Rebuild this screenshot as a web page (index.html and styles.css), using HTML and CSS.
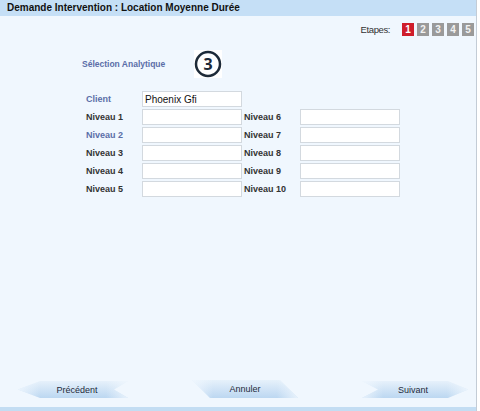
FILE: index.html
```html
<!DOCTYPE html>
<html lang="fr">
<head>
<meta charset="utf-8">
<title>Demande Intervention</title>
<link rel="stylesheet" href="styles.css">
</head>
<body>
<div class="window">
  <div class="panel">
    <div class="header">Demande Intervention : Location Moyenne Durée</div>
    <div class="content">
      <div class="steps">
        <span class="steps-label">Etapes:</span>
        <span class="step active">1</span>
        <span class="step">2</span>
        <span class="step">3</span>
        <span class="step">4</span>
        <span class="step">5</span>
      </div>
      <div class="section">
        <span class="section-title">Sélection Analytique</span>
        <span class="badge">
          <svg width="28" height="28" viewBox="0 0 28 28">
            <rect width="28" height="28" fill="#ffffff"/>
            <circle cx="14" cy="14" r="12" fill="none" stroke="#1d2a38" stroke-width="2.5"/>
            <text x="14" y="19.5" text-anchor="middle" font-family="Open Sans, Liberation Sans, sans-serif" font-weight="700" font-size="16" fill="#1d2a38">3</text>
          </svg>
        </span>
      </div>
      <div class="form">
        <label class="lbl blue">Client</label>
        <input class="field" type="text" value="Phoenix Gfi">
        <span></span><span></span>
        <label class="lbl">Niveau 1</label><input class="field" type="text">
        <label class="lbl">Niveau 6</label><input class="field" type="text">
        <label class="lbl blue">Niveau 2</label><input class="field" type="text">
        <label class="lbl">Niveau 7</label><input class="field" type="text">
        <label class="lbl">Niveau 3</label><input class="field" type="text">
        <label class="lbl">Niveau 8</label><input class="field" type="text">
        <label class="lbl">Niveau 4</label><input class="field" type="text">
        <label class="lbl">Niveau 9</label><input class="field" type="text">
        <label class="lbl">Niveau 5</label><input class="field" type="text">
        <label class="lbl">Niveau 10</label><input class="field" type="text">
      </div>
      <div class="buttons">
        <div class="btn btn-prev">
          <svg class="btn-shape" width="110" height="17" viewBox="0 0 110 17" preserveAspectRatio="none">
            <defs>
              <linearGradient id="gv" x1="0" y1="0" x2="0" y2="1">
                <stop offset="0" stop-color="#e6f1fb"/>
                <stop offset="1" stop-color="#bcd7f1"/>
              </linearGradient>
              <linearGradient id="gh" x1="0" y1="0" x2="1" y2="0">
                <stop offset="0" stop-color="#f0f7fe" stop-opacity="0.85"/>
                <stop offset="0.2" stop-color="#f0f7fe" stop-opacity="0"/>
                <stop offset="0.8" stop-color="#f0f7fe" stop-opacity="0"/>
                <stop offset="1" stop-color="#f0f7fe" stop-opacity="0.85"/>
              </linearGradient>
            </defs>
            <polygon points="0,8.5 22,0 110,0 96,8.5 110,17 22,17" fill="url(#gv)"/>
            <polygon points="0,8.5 22,0 110,0 96,8.5 110,17 22,17" fill="url(#gh)"/>
          </svg>
          <span class="btn-text">Précédent</span>
        </div>
        <div class="btn btn-cancel">
          <svg class="btn-shape" width="106" height="18" viewBox="0 0 106 18" preserveAspectRatio="none">
            <polygon points="0,0 88,0 106,18 18,18" fill="url(#gv)"/>
            <polygon points="0,0 88,0 106,18 18,18" fill="url(#gh)"/>
          </svg>
          <span class="btn-text">Annuler</span>
        </div>
        <div class="btn btn-next">
          <svg class="btn-shape" width="106" height="17" viewBox="0 0 106 17" preserveAspectRatio="none">
            <polygon points="0,0 86,0 106,8.5 86,17 0,17 16,8.5" fill="url(#gv)"/>
            <polygon points="0,0 86,0 106,8.5 86,17 0,17 16,8.5" fill="url(#gh)"/>
          </svg>
          <span class="btn-text">Suivant</span>
        </div>
      </div>
    </div>
    <div class="footer-bar"></div>
  </div>
</div>
</body>
</html>
```

FILE: styles.css
```css
* { box-sizing: border-box; }

html, body {
  margin: 0;
  padding: 0;
  background: #ffffff;
  font-family: "Liberation Sans", Arial, sans-serif;
}

.window {
  width: 480px;
  height: 411px;
  display: flex;
}

.panel {
  width: 477px;
  height: 411px;
  display: flex;
  flex-direction: column;
  background: #f0f7fe;
  border-right: 1px solid #c3ccd6;
}

.header {
  height: 16px;
  background: #c5dff6;
  color: #111111;
  font-weight: 700;
  font-size: 10px;
  line-height: 16px;
  padding-left: 7px;
  flex: none;
}

.content {
  flex: 1;
  display: flex;
  flex-direction: column;
}

.steps {
  display: flex;
  align-items: center;
  justify-content: flex-end;
  padding-top: 4px;
  padding-right: 2px;
  height: 18px;
  box-sizing: content-box;
}

.steps-label {
  font-size: 9.5px;
  color: #333333;
  margin-right: 9px;
  letter-spacing: -0.4px;
}

.step {
  width: 12px;
  height: 13px;
  margin-left: 3px;
  background: #9a9a9a;
  color: #f2f2f2;
  font-size: 10px;
  font-weight: 700;
  text-align: center;
  line-height: 13px;
}

.step.active {
  background: #cf1d2b;
  color: #ffffff;
}

.section {
  display: flex;
  align-items: center;
  padding-left: 82px;
  margin-top: 12px;
  height: 28px;
}

.section-title {
  font-size: 8.5px;
  font-weight: 700;
  color: #5b6ea8;
  width: 112px;
}

.badge {
  display: block;
  width: 28px;
  height: 28px;
}

.badge svg { display: block; }

.form {
  display: grid;
  grid-template-columns: 56px 102px 56px 100px;
  grid-auto-rows: 16px;
  row-gap: 2px;
  padding-left: 86px;
  margin-top: 13px;
}

.lbl {
  font-size: 9px;
  font-weight: 700;
  color: #333333;
  line-height: 16px;
  white-space: nowrap;
}

.lbl.blue { color: #5b6ea8; }

.field {
  width: 100px;
  height: 16px;
  margin: 0;
  padding: 0 2px;
  border: 1px solid #d3d9df;
  background: #ffffff;
  font-family: "Liberation Sans", Arial, sans-serif;
  font-size: 10px;
  color: #111111;
  outline: none;
}

.buttons {
  margin-top: auto;
  display: flex;
  align-items: flex-start;
  padding-left: 18px;
  height: 27px;
}

.btn {
  position: relative;
  display: flex;
  align-items: center;
  justify-content: center;
}

.btn-shape {
  display: block;
}

.btn-text {
  position: absolute;
  left: 0;
  right: 0;
  top: 0;
  bottom: 0;
  display: flex;
  align-items: center;
  justify-content: center;
  font-size: 9px;
  color: #1f2a3a;
}

.btn-prev { width: 110px; height: 17px; margin-top: 1px; }
.btn-prev .btn-text { padding-left: 8px; }
.btn-cancel { width: 106px; height: 18px; margin-left: 64px; }
.btn-next { width: 106px; height: 17px; margin-left: 64px; margin-top: 1px; }
.btn-next .btn-text { padding-right: 4px; }

.footer-bar {
  height: 4px;
  background: #c3ddf3;
  flex: none;
}
```
